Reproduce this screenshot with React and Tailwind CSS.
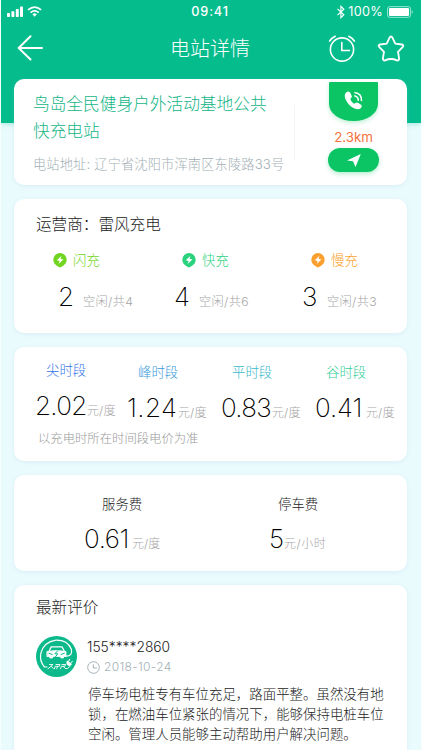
import React from "react";

const card = "ml-[13px] w-[393px] rounded-[10px] bg-white shadow-[0_1px_4px_rgba(150,190,225,0.22)]";

function StatusBar() {
  return (
    <div className="flex h-6 items-center pl-[6px] pr-[7px] text-white">
      <svg width="37" height="12" viewBox="0 0 37 12" fill="currentColor">
        <rect x="0" y="7" width="3" height="4" rx="0.6" />
        <rect x="4.5" y="5.3" width="3" height="5.7" rx="0.6" />
        <rect x="9" y="3" width="3" height="8" rx="0.6" />
        <rect x="13.3" y="0.5" width="3" height="10.5" rx="0.6" />
        <g fill="none" stroke="currentColor" strokeWidth="1.7">
          <path d="M21.5 3.8 Q28.2 -1.8 34.9 3.8" />
          <path d="M24 6.6 Q28.2 3.2 32.4 6.6" />
        </g>
        <path d="M25.9 8.3 Q28.2 6.5 30.5 8.3 L28.2 10.8Z" />
      </svg>
      <span className="ml-[148px] w-[40px] whitespace-nowrap pt-px text-[12.7px] font-medium leading-none tracking-[0.85px]">09:41</span>
      <svg className="ml-[107px]" width="8" height="14" viewBox="0 0 8 14" fill="none" stroke="currentColor" strokeWidth="1.2">
        <path d="M0.5 3.8 7 9.8 4 12.8V1.2L7 4.2 0.5 10.2" />
      </svg>
      <span className="ml-[3px] w-[36px] whitespace-nowrap pt-px text-[12.7px] leading-none tracking-[0.25px]">100%</span>
      <svg className="ml-[3px]" width="28" height="12" viewBox="0 0 28 12" fill="none">
        <rect x="0.5" y="0.5" width="23.5" height="11" rx="2.5" stroke="white" strokeOpacity="0.6" />
        <rect x="2" y="2" width="20.5" height="8" rx="1.2" fill="white" />
        <path d="M25.2 4.2Q27.6 6 25.2 7.8Z" fill="white" fillOpacity="0.6" />
      </svg>
    </div>
  );
}

function NavBar() {
  return (
    <div className="flex h-12 items-center pl-[16px] pr-[15px] text-white">
      <svg width="26" height="26" viewBox="0 0 26 26" fill="none" stroke="currentColor" strokeWidth="2" strokeLinecap="round" strokeLinejoin="round">
        <path d="M13.5 1.2 1.7 13 13.5 24.5M1.7 13H25" />
      </svg>
      <h1 className="ml-[127px] w-[84px] whitespace-nowrap pt-px text-[20px] font-light leading-none">电站详情</h1>
      <svg className="ml-[74px] mt-[2px]" width="28" height="28" viewBox="0 0 28 28" fill="none" stroke="currentColor" strokeWidth="1.6" strokeLinecap="round">
        <circle cx="14" cy="14.5" r="11.6" />
        <path d="M13.8 7.5V15.5H21.5M1.6 6.1Q3.5 3.1 7.2 1.3M26.4 6.1Q24.5 3.1 20.8 1.3" />
      </svg>
      <svg className="ml-[21px] mt-px" width="28" height="28" viewBox="0 0 28 28" fill="none" stroke="currentColor" strokeWidth="1.8" strokeLinejoin="round">
        <path d="M12.6 2.6Q14 .4 15.4 2.6L18.3 8.6 24.8 9.5Q27.4 10.1 25.6 12.1L21 16.8 22.1 23.3Q22.2 26 19.8 25.4Q14 22.6 8.2 25.4Q5.8 26 5.9 23.3L7 16.8 2.4 12.1Q.6 10.1 3.2 9.5L9.7 8.6Z" />
      </svg>
    </div>
  );
}

function StationCard() {
  return (
    <section className={card + " relative -mt-[44px] flex h-[106px]"}>
      <div className="w-[280px] pl-[19px] pt-3">
        <h2 className="w-[245px] text-[16.7px] font-light leading-[27px] text-[#12b586]">
          鸟岛全民健身户外活动基地公共
          <br />
          快充电站
        </h2>
        <p className="mt-[9px] whitespace-nowrap text-[13.2px] font-light leading-5 tracking-[0.18px] text-[#a3afb5]">电站地址: 辽宁省沈阳市浑南区东陵路33号</p>
      </div>
      <div className="mt-[26px] h-[55px] w-px bg-[#f2f4f5]" />
      <div className="ml-[33px] flex w-[51px] flex-col items-center pt-[3px]">
        <div className="flex h-[39px] w-[49px] items-center justify-center rounded-t-[1px] bg-[#0bc565] [border-bottom-left-radius:24px_17px] [border-bottom-right-radius:24px_17px] shadow-[0_2px_4px_rgba(10,197,100,0.25)]">
          <svg className="-mt-[2px]" width="19" height="19" viewBox="0 0 19 19" fill="none">
            <path d="M2.1 1.5Q4.3-.4 6.1 1.6L7.8 5Q8.1 6.5 6.5 7.5 6.2 9.8 9.3 12.2 10.4 13 11.6 12Q12.9 10.9 14.4 12L17.3 14Q18.4 15.1 17 16.9 14.7 19.4 10.5 17.6 4.1 14.6 1.2 7.5 0 3.5 2.1 1.5Z" fill="white" />
            <path d="M10.2 4.7Q14.5 5.4 14.3 9.8M10.4 1.5Q18 2.4 17.5 10.1" stroke="white" strokeWidth="1.6" />
          </svg>
        </div>
        <span className="mt-[9px] whitespace-nowrap text-[13.3px] leading-[14px] text-[#f4713a]">2.3km</span>
        <div className="mt-1 flex h-6 w-[51px] items-center justify-center rounded-full bg-[#0bc565] shadow-[0_2px_4px_rgba(10,197,100,0.3)]">
          <svg width="14" height="13" viewBox="0 0 14 13" fill="white">
            <path d="M13.8 0 0 6.5 6 7.2 8.5 13Z" />
          </svg>
        </div>
      </div>
    </section>
  );
}

function Charge({ className, color, label, count, total, numClass }) {
  return (
    <div className={"shrink-0 " + className}>
      <div className="flex h-[18px] items-center" style={{ color }}>
        <svg width="14" height="15" viewBox="0 0 14 15">
          <path d="M7 0a6.7 6.7 0 0 1 6.7 6.7c0 3-1.8 4.7-3.8 6.2L7 14.6l-2.9-1.7C2.1 11.4.3 9.7.3 6.7A6.7 6.7 0 0 1 7 0Z" fill="currentColor" />
          <path d="M8.5 2.7 3.8 7.3l2.8.7-1 3.1 4.8-4.7-2.9-.6Z" fill="white" />
        </svg>
        <span className="ml-[6px] whitespace-nowrap pt-px text-[13.4px] font-light leading-none">{label}</span>
      </div>
      <div className={"mt-[15px] flex items-baseline " + numClass}>
        <span className="w-[25px] text-[26px] font-extralight leading-[26px] text-black">{count}</span>
        <span className="whitespace-nowrap text-[12.2px] font-light leading-none tracking-[0.35px] text-[#a6a6a6]">空闲/共{total}</span>
      </div>
    </div>
  );
}

function Period({ className, color, label, price, priceClass }) {
  return (
    <div className={"shrink-0 " + className}>
      <div className="ml-[10px] whitespace-nowrap text-[13.4px] font-light leading-[18px]" style={{ color }}>{label}</div>
      <div className="mt-[14px] flex items-baseline">
        <span className={"-ml-px shrink-0 whitespace-nowrap text-[26px] font-extralight leading-[26px] text-black " + priceClass}>{price}</span>
        <span className="whitespace-nowrap text-[12px] font-light leading-none tracking-[0.1px] text-[#a6a6a6]">元/度</span>
      </div>
    </div>
  );
}

function Avatar() {
  return (
    <svg width="41" height="41" viewBox="0 0 41 41" fill="none" stroke="white" strokeLinecap="round" strokeLinejoin="round">
      <circle cx="20.5" cy="20.5" r="20.5" fill="#0bb98a" stroke="none" />
      <path d="M11 31H8.5Q3.3 25 4.8 17.5 7.6 6 20 4.2 31.5 4 35.3 13 37 20 30 20.2" strokeWidth="1.2" />
      <path d="M13.2 15 15.2 10.8H26L28.2 15" strokeWidth="1.3" />
      <path d="M11.2 15.5Q20.5 13.5 30 15.5V20.5H27.5V22H24.8V20.5H16.6V22H13.8V20.5H11.2Z" fill="white" strokeWidth="0.8" />
      <path d="M13 17.3 16.2 18.5M28.3 17.3 25 18.5M21.8 14.7 18.9 17.8H21.8L19.2 21.2" stroke="#0bb98a" strokeWidth="1" />
      <path d="M13.5 28.5H17L12 32.8M15.2 30.3 17.3 32.5M20 28.5H24L23.3 30.3H19.2L18.4 32.8M21.5 30.3 20.8 32.8M26 28.5H29.6L28.8 30.3H25.3L24.5 32.8M27.4 30.3 29.2 32.5H31.5Q34.5 31 34.7 28" strokeWidth="0.9" />
      <path d="M31.2 25.2 35.5 28.2Q33 30.3 31.4 28.7 30.3 27 31.2 25.2M32.6 25.7 33.5 23.4M34.7 27 36.4 25.3" fill="white" strokeWidth="1" />
    </svg>
  );
}

export default function App() {
  return (
    <main className="h-[750px] w-[422px] overflow-hidden border-x border-[#f5fffd] bg-[#eafbfd] font-['Inter','Noto_Sans_CJK_SC',sans-serif]">
      <header className="h-[123px] bg-[#05bc8d] shadow-[0_1px_5px_rgba(5,188,141,0.3)]">
        <StatusBar />
        <NavBar />
      </header>
      <StationCard />

      <section className={card + " mt-[14px] h-[134px] pt-[15px]"}>
        <h3 className="ml-[22px] whitespace-nowrap text-[15.6px] font-light leading-[22px] text-[#222]">运营商：雷风充电</h3>
        <div className="ml-[39px] mt-[15px] flex">
          <Charge className="w-[129px]" color="#6fd51f" label="闪充" count="2" total="4" numClass="ml-[5px]" />
          <Charge className="w-[129px]" color="#2bd27d" label="快充" count="4" total="6" numClass="-ml-[8px]" />
          <Charge className="w-[97px]" color="#fba02e" label="慢充" count="3" total="3" numClass="-ml-[9px]" />
        </div>
      </section>

      <section className={card + " mt-[14px] h-[114px] pt-[14px]"}>
        <div className="ml-[22px] flex h-[60px]">
          <Period className="w-[92px]" color="#3975e6" label="尖时段" price="2.02" priceClass="w-[52px] tracking-[-0.7px]" />
          <Period className="w-[94px] pt-[2px]" color="#3a9be0" label="峰时段" price="1.24" priceClass="w-[51px] tracking-[0.4px]" />
          <Period className="w-[94px] pt-[2px]" color="#38b9c9" label="平时段" price="0.83" priceClass="w-[51px] tracking-[-0.7px]" />
          <Period className="w-[90px] pt-[2px]" color="#35cf9c" label="谷时段" price="0.41" priceClass="w-[51px] tracking-[-0.1px]" />
        </div>
        <p className="ml-6 mt-[9px] whitespace-nowrap text-[12.35px] font-light leading-[18px] text-[#999]">以充电时所在时间段电价为准</p>
      </section>

      <section className={card + " mt-[14px] flex h-24 pt-5"}>
        <div className="w-[255px] pl-[70px]">
          <div className="ml-[18px] text-[13.4px] font-light leading-[18px] text-[#222]">服务费</div>
          <div className="mt-[13px] flex items-baseline">
            <span className="mr-[3px] whitespace-nowrap text-[26px] font-extralight leading-[26px] tracking-[-0.4px] text-black">0.61</span>
            <span className="whitespace-nowrap text-[12px] font-light leading-none text-[#a6a6a6]">元/度</span>
          </div>
        </div>
        <div>
          <div className="ml-[9px] text-[13.4px] font-light leading-[18px] text-[#222]">停车费</div>
          <div className="mt-[13px] flex items-baseline">
            <span className="w-[15px] whitespace-nowrap text-[26px] font-extralight leading-[26px] text-black">5</span>
            <span className="whitespace-nowrap text-[12px] font-light leading-none tracking-[0.5px] text-[#a6a6a6]">元/小时</span>
          </div>
        </div>
      </section>

      <section className={card + " mt-[14px] h-[200px] pt-3"}>
        <h3 className="ml-[22px] text-[15.6px] font-light leading-[22px] text-[#222]">最新评价</h3>
        <div className="ml-[22px] mt-[17px] flex">
          <Avatar />
          <div className="ml-[10px] pt-[2px]">
            <div className="whitespace-nowrap text-[13.8px] font-light leading-[18px] text-[#222]">155****2860</div>
            <div className="mt-[2px] flex h-[18px] items-center text-[#a3b1b7]">
              <svg width="13" height="13" viewBox="0 0 13 13" fill="none" stroke="currentColor" strokeWidth="1">
                <circle cx="6.5" cy="6.5" r="5.8" />
                <path d="M6.3 3.3V7H10" />
              </svg>
              <span className="ml-[4px] whitespace-nowrap text-[12px] font-light leading-none tracking-[0.35px]">2018-10-24</span>
            </div>
          </div>
        </div>
        <p className="ml-[74px] mt-[7px] whitespace-nowrap text-[13.45px] font-light leading-[20.2px] text-[#222]">
          停车场电桩专有车位充足，路面平整。虽然没有地
          <br />
          锁，在燃油车位紧张的情况下，能够保持电桩车位
          <br />
          空闲。管理人员能够主动帮助用户解决问题。
        </p>
      </section>
    </main>
  );
}
